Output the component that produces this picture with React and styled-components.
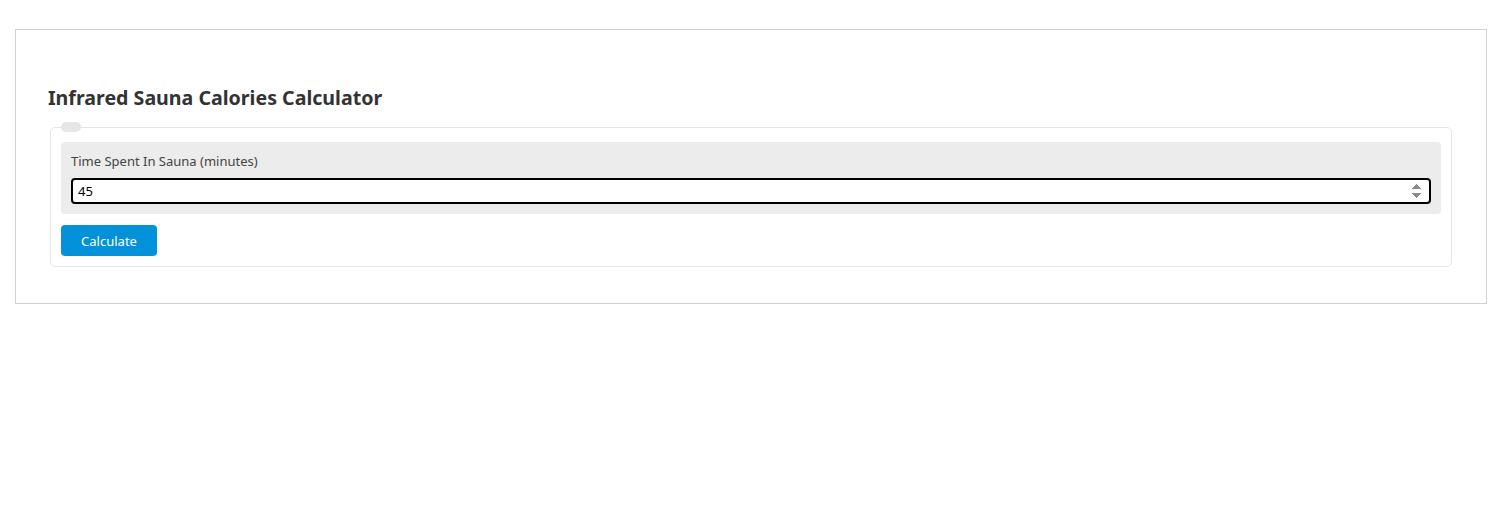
import styled, {createGlobalStyle} from "styled-components"

const GlobalStyle = createGlobalStyle`
body {
  margin: 0;
  background: #fff;
  font-family: "Noto Sans", "Open Sans", sans-serif;
}
`

const App = () => {
  return (
    <>
      <GlobalStyle/>
      <CalcBox>
        <Title>Infrared Sauna Calories Calculator</Title>
        <Form onSubmit={e => e.preventDefault()}>
          <Legend/>
          <FieldGroup>
            <Label htmlFor="time">Time Spent In Sauna (minutes)</Label>
            <Input id="time" type="number" defaultValue="45" autoFocus/>
          </FieldGroup>
          <Button type="submit">Calculate</Button>
        </Form>
      </CalcBox>
    </>
  )
}

const CalcBox = styled.div`
box-sizing: border-box;
width: 1472px;
margin: 29px 0 0 15px;
padding: 0 34px 36px;
border: 1px solid #d0d0d0;
`

const Title = styled.h2`
margin: 56px 0 12px -2px;
font-size: 19.6px;
line-height: 24px;
font-weight: 700;
color: #333;
`

const Form = styled.fieldset`
margin: 0;
padding: 10px 10px 10px;
border: 1px solid #e6e6e6;
border-radius: 5px;
min-width: 0;
`

const Legend = styled.legend`
width: 20px;
height: 10px;
padding: 0;
background: #e6e6e6;
border-radius: 5px;
`

const FieldGroup = styled.div`
display: flex;
flex-direction: column;
padding: 10px;
background: #ebeceb;
border-radius: 4px;
`

const Label = styled.label`
font-size: 13px;
line-height: 18px;
color: #444;
margin-bottom: 8px;
`

const Input = styled.input`
box-sizing: border-box;
height: 26px;
padding: 0 5px;
border: 2px solid #000;
border-radius: 4px;
font: 13px "Noto Sans", sans-serif;
color: #000;
background: #fff;
outline: none;
`

const Button = styled.button`
margin-top: 11px;
width: 96px;
height: 31px;
border: 0;
border-radius: 4px;
background: #0392d9;
color: #fff;
font: 13px "Noto Sans", sans-serif;
cursor: pointer;
`

export default App
